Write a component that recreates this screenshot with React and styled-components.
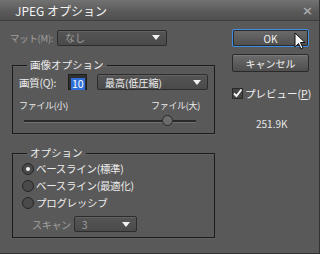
import styled, { createGlobalStyle } from 'styled-components';

const GlobalStyle = createGlobalStyle`
    html, body{
        margin: 0;
        padding: 0;
        background: #595959;
    }
    body{
        font-family: "Noto Sans CJK JP", "Liberation Sans", sans-serif;
        font-size: 10px;
    }
`;

function Arrow({ color = '#f2f2f2' }){
    return (
        <svg width="8" height="5" viewBox="0 0 8 5">
            <path d="M0 0 H8 L4 5 Z" fill={color} />
        </svg>
    );
}

function JpegOptions(){
    return (
        <Window>
            <TitleBar>
                <span>JPEG オプション</span>
                <Close>×</Close>
            </TitleBar>
            <Body>
                <LeftColumn>
                    <MatRow>
                        <Label dim>マット(M):</Label>
                        <Select width={110} dim>
                            <span>なし</span>
                            <Arrow />
                        </Select>
                    </MatRow>

                    <Group height={75}>
                        <legend>画像オプション</legend>
                        <QualityRow>
                            <Label>画質(Q):</Label>
                            <NumberBox><span>10</span></NumberBox>
                            <Select width={111}>
                                <span>最高(低圧縮)</span>
                                <Arrow />
                            </Select>
                        </QualityRow>
                        <SliderLabels>
                            <span>ファイル(小)</span>
                            <span>ファイル(大)</span>
                        </SliderLabels>
                        <Track>
                            <Thumb style={{ left: '83%' }} />
                        </Track>
                    </Group>

                    <Group height={91}>
                        <legend>オプション</legend>
                        <RadioRow><Radio checked />ベースライン(標準)</RadioRow>
                        <RadioRow><Radio />ベースライン(最適化)</RadioRow>
                        <RadioRow><Radio />プログレッシブ</RadioRow>
                        <ScanRow>
                            <Label dim>スキャン</Label>
                            <Select width={63} dim>
                                <span>3</span>
                                <Arrow />
                            </Select>
                        </ScanRow>
                    </Group>
                </LeftColumn>

                <RightColumn>
                    <Button focused>OK</Button>
                    <Button>キャンセル</Button>
                    <CheckRow>
                        <CheckBox>
                            <svg width="11" height="11" viewBox="0 0 11 11">
                                <path d="M2 5.5 L4.5 8 L9.5 1.5" stroke="#f4f4f4" strokeWidth="2" fill="none" />
                            </svg>
                        </CheckBox>
                        <span>プレビュー(<u>P</u>)</span>
                    </CheckRow>
                    <Size>251.9K</Size>
                </RightColumn>
            </Body>
            <Cursor>
                <svg width="12" height="18" viewBox="0 0 12 18">
                    <path d="M1 1 V15 L4.5 11.5 L7 17 L9 16 L6.5 10.5 L11 10.5 Z" fill="#f6f6f6" stroke="#111" strokeWidth="1" />
                </svg>
            </Cursor>
        </Window>
    );
}

export default function App(){
    return (
        <>
            <GlobalStyle />
            <JpegOptions />
        </>
    );
}

const Window = styled.div`
    position: relative;
    width: 320px;
    height: 254px;
    box-sizing: border-box;
    background: #595959;
    border-right: 1px solid #333;
    border-bottom: 1px solid #333;
    color: #ececec;
    overflow: hidden;
`;

const TitleBar = styled.div`
    height: 21px;
    display: flex;
    align-items: center;
    justify-content: space-between;
    padding: 0 6px 0 15px;
    background: linear-gradient(#727272, #595959 60%, #505050);
    border-bottom: 1px solid #3e3e3e;
    font-size: 12px;
    color: #f4f4f4;
    box-sizing: border-box;
`;

const Close = styled.span`
    font-family: "DejaVu Sans", sans-serif;
    font-size: 13px;
    font-weight: bold;
    color: #a8a8a8;
`;

const Body = styled.div`
    display: flex;
    padding: 8px 0 0 12px;
`;

const LeftColumn = styled.div`
    width: 203px;
    display: flex;
    flex-direction: column;
`;

const RightColumn = styled.div`
    margin-left: 17px;
    width: 77px;
    display: flex;
    flex-direction: column;
`;

const Label = styled.span`
    flex-shrink: 0;
    color: ${p => p.dim ? '#a0a0a0' : '#ececec'};
    white-space: nowrap;
    letter-spacing: -0.3px;
`;

const MatRow = styled.div`
    display: flex;
    align-items: center;
    height: 17px;
    margin-left: -2px;

    ${Label}{
        width: 47px;
        font-size: 9.5px;
    }
`;

const Select = styled.div`
    flex-shrink: 0;
    width: ${p => p.width}px;
    height: 16px;
    box-sizing: border-box;
    display: flex;
    align-items: center;
    justify-content: space-between;
    padding: 0 6px 0 7px;
    border: 1px solid #2c2c2c;
    border-radius: 2px;
    background: linear-gradient(#555, #4a4a4a);
    box-shadow: inset 0 1px 0 rgba(255,255,255,0.08);
    color: ${p => p.dim ? '#a0a0a0' : '#f0f0f0'};
    font-size: 10px;
`;

const Group = styled.fieldset`
    margin: 13px 0 0 0;
    padding: 0 6px 0 6px;
    height: ${p => p.height}px;
    box-sizing: border-box;
    border: 1px solid #1c1c1c;
    box-shadow: 0 1px 0 rgba(255,255,255,0.06), inset 0 1px 0 rgba(255,255,255,0.06);

    legend{
        margin-left: 8px;
        padding: 0 3px;
        line-height: 12px;
        font-size: 10.5px;
        color: #ececec;
    }
`;

const QualityRow = styled.div`
    display: flex;
    align-items: center;
    margin-top: 3px;
    height: 16px;

    ${Label}{
        width: 49px;
        font-size: 10.5px;
    }
`;

const NumberBox = styled.div`
    width: 19px;
    height: 16px;
    box-sizing: border-box;
    margin-right: 10px;
    background: #303030;
    border: 1px solid #1d1d1d;
    padding: 1px 2px;

    span{
        display: inline-block;
        background: #2f6fd6;
        color: #fff;
        line-height: 12px;
        font-size: 10.5px;
        padding: 0 1px;
    }
`;

const SliderLabels = styled.div`
    display: flex;
    justify-content: space-between;
    margin-top: 9px;
    width: 181px;
    font-size: 9px;
    letter-spacing: -0.3px;
    color: #ececec;
`;

const Track = styled.div`
    position: relative;
    margin: 8px 0 0 5px;
    width: 172px;
    height: 2px;
    background: #2a2a2a;
    border-bottom: 1px solid #707070;
`;

const Thumb = styled.div`
    position: absolute;
    top: -5px;
    width: 11px;
    height: 11px;
    margin-left: -5px;
    box-sizing: border-box;
    border-radius: 50%;
    border: 1px solid #2a2a2a;
    background: #6c6c6c;
`;

const RadioRow = styled.div`
    display: flex;
    align-items: center;
    height: 17px;
    margin-left: 3px;
    gap: 2px;
    font-size: 10.5px;
    letter-spacing: -0.3px;
    &:first-of-type{
        margin-top: 1px;
    }
`;

const Radio = styled.span`
    position: relative;
    width: 12px;
    height: 12px;
    box-sizing: border-box;
    border-radius: 50%;
    border: 1px solid #262626;
    background: #4a4a4a;

    &::after{
        content: '';
        position: absolute;
        top: 3px;
        left: 3px;
        width: 4px;
        height: 4px;
        border-radius: 50%;
        background: ${p => p.checked ? '#f4f4f4' : 'transparent'};
    }
`;

const ScanRow = styled.div`
    display: flex;
    align-items: center;
    margin: 5px 0 0 13px;

    ${Label}{
        width: 42px;
    }
`;

const Button = styled.div`
    height: 18px;
    box-sizing: border-box;
    display: flex;
    align-items: center;
    justify-content: center;
    margin-bottom: 7px;
    border: 1px solid ${p => p.focused ? '#3f8ee6' : '#2a2a2a'};
    border-radius: 2px;
    background: linear-gradient(#6c6c6c, #4e4e4e);
    box-shadow: ${p => p.focused ? 'inset 0 0 0 1px #2c2c2c' : 'inset 0 1px 0 rgba(255,255,255,0.1)'};
    color: #f2f2f2;
    font-size: 10px;

    &:last-of-type{
        height: 16px;
    }
`;

const CheckRow = styled.div`
    display: flex;
    align-items: center;
    gap: 2px;
    margin-top: 7px;
    font-size: 10.5px;
    white-space: nowrap;
    color: #f0f0f0;
`;

const CheckBox = styled.span`
    flex-shrink: 0;
    width: 11px;
    height: 11px;
    box-sizing: border-box;
    border: 1px solid #2a2a2a;
    background: #454545;
    display: flex;
    svg{
        margin: -1px;
    }
`;

const Size = styled.div`
    margin-top: 15px;
    padding-left: 24px;
    font-size: 10px;
    color: #e6e6e6;
`;

const Cursor = styled.div`
    position: absolute;
    left: 294px;
    top: 32px;
    line-height: 0;
`;
